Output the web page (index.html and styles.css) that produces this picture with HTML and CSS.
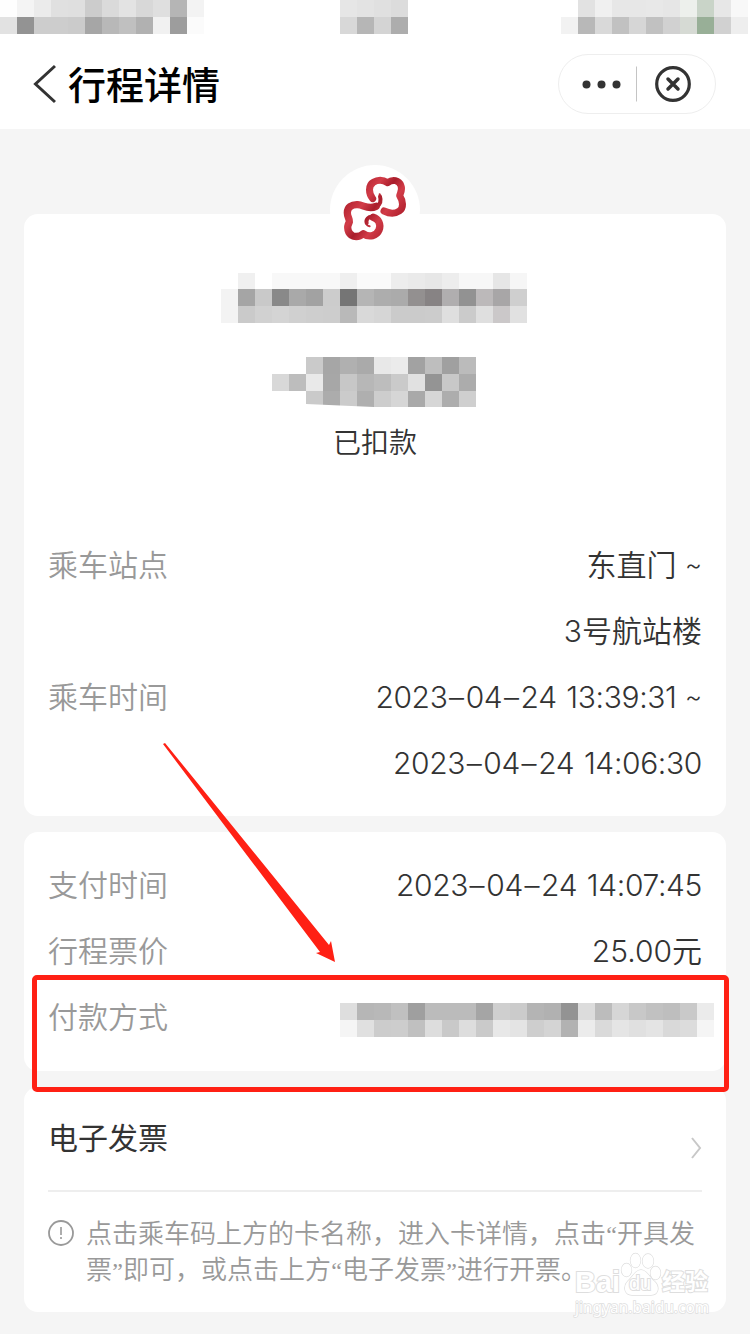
FILE: index.html
```html
<!DOCTYPE html>
<html lang="zh-CN">
<head>
<meta charset="utf-8">
<title>行程详情</title>
<link rel="stylesheet" href="styles.css">
</head>
<body>
<div class="screen">
  <div class="status">
    <div class="mosaic" data-rows="fe f4 eb e0 df cc da e3 d8 df b5 f3|e2 93 cd cd cb a6 b8 c0 b1 f1 9d fb"></div>
    <div class="mosaic" data-rows="e6 e3 e0 dc|d8 b6 d4 ad"></div>
    <div class="mosaic" data-rows="ff e2 f0 e7 e7 e8 e6 edf0ec c9d4c8 e7 f8|f2 b8 d9 c1 d6 c1 d1 d6dad4 98af97 d1 ee"></div>
  </div>
  <header class="header">
    <svg class="back" width="24" height="40" viewBox="0 0 24 40"><path d="M23 2 3.500 20 23 38" fill="none" stroke="#333" stroke-width="3"/></svg>
    <h1 class="title">行程详情</h1>
    <div class="capsule">
      <svg width="156" height="58" viewBox="0 0 156 58"><g fill="#333"><circle cx="27.500" cy="29.500" r="4"/><circle cx="42.500" cy="29.500" r="4"/><circle cx="57.500" cy="29.500" r="4"/></g><path d="M77.500 11.500v35" stroke="#c4c4c4"/><circle cx="114" cy="29" r="16.300" fill="none" stroke="#333" stroke-width="3.200"/><path d="m109 24 10 10m0-10-10 10" stroke="#333" stroke-width="3.500" stroke-linecap="round"/></svg>
    </div>
  </header>

  <main class="content">
    <section class="card trip">
      <div class="logo">
        <svg width="90" height="90" viewBox="30 30 270 270">
          <defs><linearGradient id="red" x1="0" y1="0" x2="60" y2="45" gradientUnits="userSpaceOnUse" spreadMethod="reflect"><stop offset="0" stop-color="#b52431"/><stop offset=".55" stop-color="#d23c48"/><stop offset="1" stop-color="#a91d2b"/></linearGradient></defs>
          <g fill="none" stroke="url(#red)" stroke-linecap="round" stroke-linejoin="round">
            <path stroke-width="21" d="M158 131C146 116 144 91 160 82C175 73 190 75 203 83C218 72 237 75 243 92C248 105 241 113 239 122C249 138 252 158 238 168C222 179 206 175 192 168"/>
            <path stroke-width="22" d="M168 154C145 165 131 150 113 149C95 148 82 157 82 173C82 187 89 190 88 201C79 217 83 236 99 243C113 247 123 242 130 236C148 249 170 242 177 225C184 208 175 191 160 187"/>
            <path stroke-width="12" d="M170 156C181 147 184 136 180 125M160 186C145 183 137 194 140 204"/>
            <path stroke-width="6" d="M180 130L179 118M138 203C140 210 144 213 149 214"/>
          </g>
        </svg>
      </div>
      <div class="mosaic name" data-rows="ff f0 ff f8 f8 f8 f8 ef fa fa ed ea e7 ed f7 f7 e6 f6|f3 a5 c9 89 a9 a2 cc 75 b5 ad ab 939090 878384 b0aeaf 929292 bcb9ba a8a6a7 cf|f3 ca d1 d4 d0 ce cd b9 d9 d6 cb cb cc df cb df cbc8c9 e1"></div>
      <div class="mosaic amount" data-rows="ff ff ca a6 b0 aa e8 eb a2 be a0 bb|d8 bd e9 a7 c7 b7 bd ca e1 94 c8 ac|ff ff ca ac cb af cd d6 a9 d6 ad cf"></div>
      <div class="state">已扣款</div>
      <div class="row"><span class="label">乘车站点</span><span class="value">东直门 <span class="tilde">~</span><br>3号航站楼</span></div>
      <div class="row"><span class="label">乘车时间</span><span class="value"><span class="num">2023<i class="dash">–</i>04<i class="dash">–</i>24 13:39:31</span> <span class="tilde">~</span><br><span class="num">2023<i class="dash">–</i>04<i class="dash">–</i>24 14:06:30</span></span></div>
    </section>

    <section class="card payment">
      <div class="row"><span class="label">支付时间</span><span class="value num">2023<i class="dash">–</i>04<i class="dash">–</i>24 14:07:45</span></div>
      <div class="row"><span class="label">行程票价</span><span class="value">25.00元</span></div>
      <div class="row method"><span class="label">付款方式</span><div class="mosaic" data-rows="de b6 b8 c0 9f bb bb bb a5 cf cb b4 b1 93 dc bc d6 c8 c1 be c9 eb|f5 e0 cc cd c0 dd c9 dd ca e8 e4 ce d4 b2 ec da e5 e0 e4 d9 dc f5"></div></div>
    </section>

    <section class="card invoice">
      <div class="invoice-link"><span>电子发票</span><svg class="chevron" width="12" height="24" viewBox="0 0 12 24"><path d="m2 2 8 10-8 10" fill="none" stroke="#c8c8c8" stroke-width="2"/></svg></div>
      <div class="note">
        <svg class="info" width="26" height="26" viewBox="0 0 26 26"><circle cx="13" cy="13" r="12" fill="none" stroke="#999" stroke-width="1.800"/><path d="M13 7v8m0 2v2" stroke="#999" stroke-width="1.600"/></svg>
        <p class="note-text">点击乘车码上方的卡名称，进入卡详情，点击<span class="quote">“</span>开具发<br>票<span class="quote">”</span>即可，或点击上方<span class="quote">“</span>电子发票<span class="quote">”</span>进行开票<span class="stop">。</span></p>
      </div>
    </section>
  </main>

  <div class="highlight"></div>
  <svg class="arrow" width="176" height="222" viewBox="162 742 176 222"><path d="m163 744 2-1 164 202 2-4 4 21-19-9 4-1z" fill="#ff2014"/></svg>

  <div class="watermark">
    <div class="brand">
      <span class="bai">Bai</span>
      <span class="paw"><svg width="42" height="46" viewBox="0 0 42 46"><g fill="#fff" stroke="#dedede" stroke-width="1.300"><ellipse cx="6.500" cy="18" rx="5" ry="6.500"/><ellipse cx="15.500" cy="8.500" rx="5" ry="7"/><ellipse cx="28" cy="9" rx="5.500" ry="7"/><ellipse cx="35.500" cy="21" rx="5" ry="6.500"/><path d="M21 18C15 18 13 25 8 29C3 34 4 43 12 43C18 43 24 43 31 43C39 43 40 34 34 29C29 25 27 18 21 18Z"/></g></svg><span class="du">du</span></span>
      <span class="exp">经验</span>
    </div>
    <div class="site">jingyan.baidu.com</div>
  </div>
</div>
<script src="mosaic.js"></script>
</body>
</html>
```
FILE: styles.css
```css
* { box-sizing: border-box; }
body {
  margin: 0;
  background: #f5f5f5;
  color: #333;
  font-family: "Inter", "Noto Sans CJK SC", sans-serif;
}
.screen {
  position: relative;
  width: 750px;
  height: 1334px;
  overflow: hidden;
}
.mosaic {
  display: grid;
  grid-auto-rows: 17px;
  flex: none;
}
.status {
  display: flex;
  justify-content: space-between;
  height: 34px;
  padding-right: 2px;
  background: #fff;
}
.status .mosaic:nth-child(2) { margin-right: 17px; }
.header {
  display: flex;
  align-items: center;
  height: 95px;
  padding: 0 34px 0 32px;
  background: #fff;
}
.back { margin-top: 4px; }
.title {
  margin: 6px 0 0 12px;
  color: #000;
  font-size: 38px;
  font-weight: 500;
  line-height: 54px;
}
.capsule {
  width: 158px;
  height: 60px;
  margin: 4px 0 0 auto;
  border: 1px solid #eee;
  border-radius: 30px;
}
.capsule svg { display: block; }
.content {
  display: flex;
  flex-direction: column;
  gap: 16px;
  padding: 85px 24px 0;
}
.card {
  padding: 20px 24px;
  border-radius: 14px;
  background: #fff;
}
.trip {
  display: flex;
  flex-direction: column;
  align-items: stretch;
  height: 602px;
  padding-top: 0;
}
.logo {
  align-self: center;
  width: 90px;
  height: 90px;
  margin-top: -49px;
  border-radius: 50%;
  background: #fff;
}
.logo svg { display: block; }
.name {
  align-self: center;
  grid-template-rows: 16px 17px 17px;
  margin: 18px 2px 0 0;
}
.amount {
  align-self: center;
  margin: 34px 2px 0 0;
  clip-path: polygon(0 0, 100% 0, 100% 50px, 102px 50px, 34px 47px, 0 47px);
}
.state {
  margin: 15px 0 69px;
  font-size: 28px;
  font-weight: 350;
  line-height: 40px;
  text-align: center;
}
.row {
  display: flex;
  justify-content: space-between;
  font-size: 30px;
  font-weight: 350;
  line-height: 66px;
}
.label { color: #999; }
.value { text-align: right; }
.num {
  letter-spacing: -0.350px;
  word-spacing: 1.500px;
}
.dash {
  margin: 0 2px 0 1.500px;
  font-style: normal;
}
.tilde {
  font-size: 26px;
  line-height: 0;
  vertical-align: 2px;
}
.payment { height: 239px; }
.method { margin-right: -12px; }
.method .mosaic { margin-top: 19px; }
.invoice {
  height: 225px;
  padding-top: 0;
}
.invoice-link {
  display: flex;
  justify-content: space-between;
  align-items: center;
  height: 105px;
  padding-bottom: 2px;
  border-bottom: 2px solid #eee;
  font-size: 30px;
  line-height: 66px;
}
.chevron { margin-top: 20px; }
.note {
  display: flex;
  gap: 12px;
  padding-top: 24px;
}
.info {
  flex: none;
  margin-top: 4px;
}
.note-text {
  margin: 0;
  color: #999;
  font-size: 26px;
  font-weight: 350;
  line-height: 36px;
  white-space: nowrap;
}
.quote {
  display: inline-block;
  width: 11px;
  font-family: "Liberation Serif", serif;
  font-size: 24px;
  line-height: 1;
  text-align: center;
}
.stop { font-feature-settings: "halt"; }
.highlight {
  position: absolute;
  left: 32px;
  top: 975px;
  width: 697px;
  height: 117px;
  border: 5px solid #ff2014;
  border-radius: 5px;
}
.arrow {
  position: absolute;
  left: 162px;
  top: 742px;
}
.watermark {
  position: absolute;
  left: 575px;
  top: 1252px;
  width: 140px;
  color: #fff;
  -webkit-text-stroke: 2px #dedede;
  paint-order: stroke fill;
}
.brand {
  display: flex;
  align-items: flex-end;
  height: 46px;
  line-height: 32px;
  font-family: "Liberation Sans", "Noto Sans CJK SC", sans-serif;
  font-weight: 700;
}
.brand > span { flex: none; }
.bai { width: 45px; font-size: 29px; }
.paw {
  position: relative;
  width: 42px;
  height: 46px;
}
.paw svg { display: block; }
.du {
  position: absolute;
  left: 9px;
  top: 18px;
  font-size: 20px;
  font-weight: 400;
  line-height: 26px;
}
.exp { font-size: 23px; }
.site {
  font-family: "Noto Sans", sans-serif;
  font-size: 15.500px;
  line-height: 18px;
  -webkit-text-stroke-width: 1.500px;
}
```
FILE: mosaic.js
```js
// Fills each .mosaic with 17px cells; a two-digit value is a grey level.
document.querySelectorAll('.mosaic').forEach(function (el) {
  var rows = el.dataset.rows.split('|').map(function (r) { return r.split(' '); });
  el.style.gridTemplateColumns = 'repeat(' + rows[0].length + ', 17px)';
  rows.flat().forEach(function (c) {
    var cell = document.createElement('i');
    cell.style.background = '#' + (c.length === 2 ? c + c + c : c);
    el.appendChild(cell);
  });
});
```
